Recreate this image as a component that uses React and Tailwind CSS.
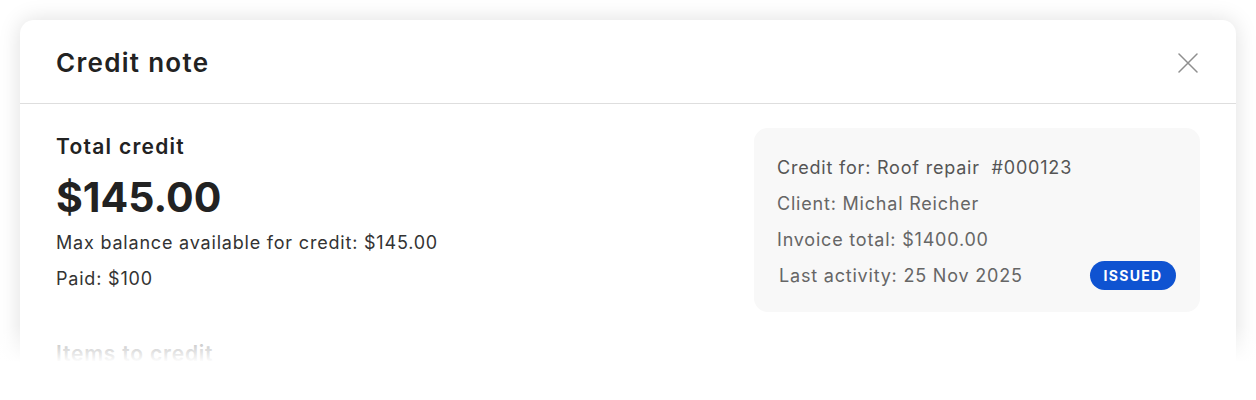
import React from "react";

export default function App() {
  return (
    <div className="relative w-[1256px] h-[400px] overflow-hidden bg-white" style={{ fontFamily: '"Inter", "Open Sans", sans-serif' }}>
      <div className="pt-5 px-5 h-full">
        <div className="h-[420px] bg-white rounded-t-[14px] shadow-[0_0_22px_rgba(0,0,0,0.13)]">
          <div className="h-[84px] px-9 flex items-center justify-between border-b border-[#dedede]">
            <h1 className="text-[26px] font-semibold text-[#222] tracking-[0.05em] pt-[2px]">Credit note</h1>
            <svg width="20" height="20" viewBox="0 0 20 20" className="mr-[2px] mt-[2px]">
              <path d="M1 1 L19 19 M19 1 L1 19" stroke="#8f8f8f" strokeWidth="1.5" strokeLinecap="round" />
            </svg>
          </div>
          <div className="px-9 pt-6 flex justify-between tracking-[0.05em]">
            <div className="pt-[2px]">
              <div className="text-[21px] leading-[34px] font-semibold text-[#222] tracking-[0.06em]">Total credit</div>
              <div className="text-[41px] leading-[56px] font-bold text-[#222] mt-[5px] tracking-normal">$145.00</div>
              <div className="text-[18px] leading-[36px] text-[#333]">Max balance available for credit: $145.00</div>
              <div className="text-[18px] leading-[36px] text-[#333]">Paid: $100</div>
              <div className="text-[21px] leading-[34px] font-semibold text-[#999] mt-[40px]">Items to credit</div>
            </div>
            <div className="w-[446px] h-[184px] rounded-[14px] bg-[#f8f8f8] pl-[23px] pr-6 pt-[22px] pb-[18px] text-[18px] leading-[36px] text-[#666]">
              <div className="text-[#555]">Credit for: Roof repair&nbsp; #000123</div>
              <div>Client: Michal Reicher</div>
              <div>Invoice total: $1400.00</div>
              <div className="flex items-center justify-between">
                <span className="pl-[2px]">Last activity: 25 Nov 2025</span>
                <span className="-mt-[2px] h-[29px] rounded-full bg-[#0f53d1] text-white text-[14px] font-bold tracking-[1.3px] leading-[29px] w-[86px] text-center">ISSUED</span>
              </div>
            </div>
          </div>
        </div>
      </div>
      <div className="absolute left-0 right-0 top-[325px] h-[75px] bg-gradient-to-b from-white/0 via-white to-white" />
    </div>
  );
}
